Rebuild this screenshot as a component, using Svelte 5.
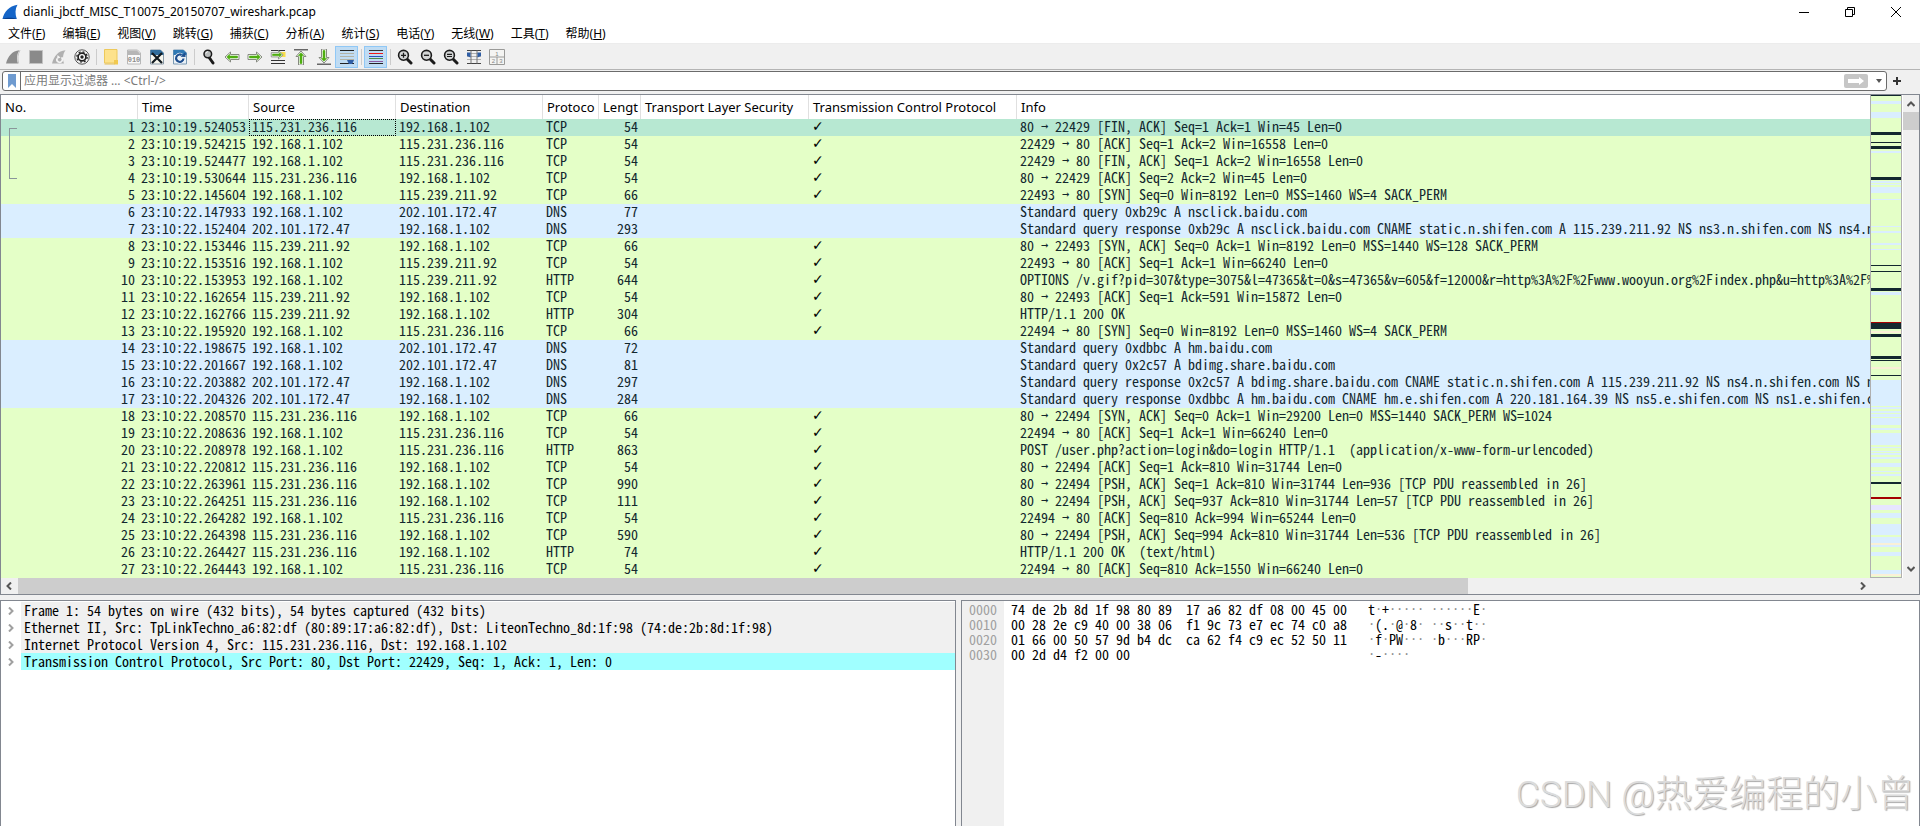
<script lang="ts">
  type Packet = {
    time: string
    src: string
    dst: string
    proto: string
    len: number
    info: string
  }

  const A = '115.231.236.116';
  const B = '115.239.211.92';
  const ME = '192.168.1.102';
  const NS = '202.101.172.47';

  function p(time: string, src: string, dst: string, proto: string, len: number, info: string): Packet {
    return { time, src, dst, proto, len, info };
  }

  const packets: Packet[] = [
    p('23:10:19.524053', A, ME, 'TCP', 54, '80 → 22429 [FIN, ACK] Seq=1 Ack=1 Win=45 Len=0'),
    p('23:10:19.524215', ME, A, 'TCP', 54, '22429 → 80 [ACK] Seq=1 Ack=2 Win=16558 Len=0'),
    p('23:10:19.524477', ME, A, 'TCP', 54, '22429 → 80 [FIN, ACK] Seq=1 Ack=2 Win=16558 Len=0'),
    p('23:10:19.530644', A, ME, 'TCP', 54, '80 → 22429 [ACK] Seq=2 Ack=2 Win=45 Len=0'),
    p('23:10:22.145604', ME, B, 'TCP', 66, '22493 → 80 [SYN] Seq=0 Win=8192 Len=0 MSS=1460 WS=4 SACK_PERM'),
    p('23:10:22.147933', ME, NS, 'DNS', 77, 'Standard query 0xb29c A nsclick.baidu.com'),
    p('23:10:22.152404', NS, ME, 'DNS', 293, 'Standard query response 0xb29c A nsclick.baidu.com CNAME static.n.shifen.com A 115.239.211.92 NS ns3.n.shifen.com NS ns4.n.shifen.com'),
    p('23:10:22.153446', B, ME, 'TCP', 66, '80 → 22493 [SYN, ACK] Seq=0 Ack=1 Win=8192 Len=0 MSS=1440 WS=128 SACK_PERM'),
    p('23:10:22.153516', ME, B, 'TCP', 54, '22493 → 80 [ACK] Seq=1 Ack=1 Win=66240 Len=0'),
    p('23:10:22.153953', ME, B, 'HTTP', 644, 'OPTIONS /v.gif?pid=307&type=3075&l=47365&t=0&s=47365&v=605&f=12000&r=http%3A%2F%2Fwww.wooyun.org%2Findex.php&u=http%3A%2F%2F'),
    p('23:10:22.162654', B, ME, 'TCP', 54, '80 → 22493 [ACK] Seq=1 Ack=591 Win=15872 Len=0'),
    p('23:10:22.162766', B, ME, 'HTTP', 304, 'HTTP/1.1 200 OK'),
    p('23:10:22.195920', ME, A, 'TCP', 66, '22494 → 80 [SYN] Seq=0 Win=8192 Len=0 MSS=1460 WS=4 SACK_PERM'),
    p('23:10:22.198675', ME, NS, 'DNS', 72, 'Standard query 0xdbbc A hm.baidu.com'),
    p('23:10:22.201667', ME, NS, 'DNS', 81, 'Standard query 0x2c57 A bdimg.share.baidu.com'),
    p('23:10:22.203882', NS, ME, 'DNS', 297, 'Standard query response 0x2c57 A bdimg.share.baidu.com CNAME static.n.shifen.com A 115.239.211.92 NS ns4.n.shifen.com NS ns3.n.shifen.com'),
    p('23:10:22.204326', NS, ME, 'DNS', 284, 'Standard query response 0xdbbc A hm.baidu.com CNAME hm.e.shifen.com A 220.181.164.39 NS ns5.e.shifen.com NS ns1.e.shifen.com'),
    p('23:10:22.208570', A, ME, 'TCP', 66, '80 → 22494 [SYN, ACK] Seq=0 Ack=1 Win=29200 Len=0 MSS=1440 SACK_PERM WS=1024'),
    p('23:10:22.208636', ME, A, 'TCP', 54, '22494 → 80 [ACK] Seq=1 Ack=1 Win=66240 Len=0'),
    p('23:10:22.208978', ME, A, 'HTTP', 863, 'POST /user.php?action=login&do=login HTTP/1.1  (application/x-www-form-urlencoded)'),
    p('23:10:22.220812', A, ME, 'TCP', 54, '80 → 22494 [ACK] Seq=1 Ack=810 Win=31744 Len=0'),
    p('23:10:22.263961', A, ME, 'TCP', 990, '80 → 22494 [PSH, ACK] Seq=1 Ack=810 Win=31744 Len=936 [TCP PDU reassembled in 26]'),
    p('23:10:22.264251', A, ME, 'TCP', 111, '80 → 22494 [PSH, ACK] Seq=937 Ack=810 Win=31744 Len=57 [TCP PDU reassembled in 26]'),
    p('23:10:22.264282', ME, A, 'TCP', 54, '22494 → 80 [ACK] Seq=810 Ack=994 Win=65244 Len=0'),
    p('23:10:22.264398', A, ME, 'TCP', 590, '80 → 22494 [PSH, ACK] Seq=994 Ack=810 Win=31744 Len=536 [TCP PDU reassembled in 26]'),
    p('23:10:22.264427', A, ME, 'HTTP', 74, 'HTTP/1.1 200 OK  (text/html)'),
    p('23:10:22.264443', ME, A, 'TCP', 54, '22494 → 80 [ACK] Seq=810 Ack=1550 Win=66240 Len=0')
  ];

  let selected = $state(0);
  let filter = $state('');

  const menus = [
    ['文件', 'F'], ['编辑', 'E'], ['视图', 'V'], ['跳转', 'G'], ['捕获', 'C'], ['分析', 'A'],
    ['统计', 'S'], ['电话', 'Y'], ['无线', 'W'], ['工具', 'T'], ['帮助', 'H']
  ];

  const columns = [
    { title: 'No.', cls: 'no' },
    { title: 'Time', cls: 'time' },
    { title: 'Source', cls: 'addr' },
    { title: 'Destination', cls: 'addr' },
    { title: 'Protoco', cls: 'proto' },
    { title: 'Lengt', cls: 'len' },
    { title: 'Transport Layer Security', cls: 'tls' },
    { title: 'Transmission Control Protocol', cls: 'tcp' },
    { title: 'Info', cls: 'info' }
  ];

  const arrow = '<path d="M1 8 6.500 3V5.500h8.500v5H6.500V13z" fill="#fff" stroke="#85897f"/><path d="M2.800 8 5.500 5.300V7h8v2h-8v1.700z" fill="#4fae10" stroke="#4fae10" stroke-width=".6"/>';
  const lens = '<path d="M9.800 9.800 14 14" stroke="#1b1b1b" stroke-width="3" stroke-linecap="round"/><circle cx="6.500" cy="6.300" r="4.900" fill="#d4d6d6" stroke="#1b1b1b" stroke-width="1.600"/>';
  const page = '<path d="M1.500 1h10l3 3v11h-13z"';

  const icons: Record<string, string> = {
    start: '<path d="M1 14.500C3 7 7 2 14.500 1.200 11.600 5 11.500 10 13 14.500z" fill="#8d8d8d"/><path d="M13.600 14.500C12.400 10 12.600 5 15 1.300" fill="none" stroke="#c4c4c4"/>',
    stop: '<path d="M1.500 1.500h13v13h-13z" fill="#8a8a8a" stroke="#c2c2c2"/>',
    restart: '<path d="M1 14.500C3 7 7 2 14.500 1.200 11.600 5 11.500 10 13 14.500z" fill="#b0b0b0"/><path d="M6 9.500a2.800 2.800 0 1 0 4.500-1.200" fill="none" stroke="#f4f4f4" stroke-width="1.700"/><path d="M6.500 6 9.500 8.500 6 10z" fill="#f4f4f4"/>',
    options: '<circle cx="8" cy="8" r="7.200" fill="#f6f6f6" stroke="#555"/><circle cx="8" cy="8" r="3.900" fill="#fff" stroke="#222" stroke-width="1.700"/><circle cx="8" cy="8" r="5.200" fill="none" stroke="#222" stroke-width="1.300" stroke-dasharray="2 2.080"/><circle cx="8" cy="8" r="1.700" fill="#222"/>',
    open: '<path d="M1.500.5h12.500v13.500h-12.500z" fill="#fde28c" stroke="#edc95b"/><path d="M11 11h4v4.500h-4z" fill="#f1c94f"/><path d="M1.500 15h10" stroke="#e3bd55"/>',
    save: page + ' fill="#fafafa" stroke="#b8b8b8"/><path d="M2 1.500h9l3 3v1.500H2z" fill="#b6b6b6"/><text x="8" y="13" text-anchor="middle" font-family="Liberation Mono" font-size="7" font-weight="700" fill="#8e8e8e">010</text>',
    close: page + ' fill="#f6f6ee" stroke="#8a9aa8"/><path d="M1.500 1h10l3 3v2h-13z" fill="#2f6c9c"/><path d="M3 4 13 14M13 4 3 14" stroke="#111a20" stroke-width="2.200"/>',
    reload: page + ' fill="#e9f0f5" stroke="#7a9ab4"/><path d="M1.500 1h10l3 3v2h-13z" fill="#2f79b4"/><path d="M11.500 9.500a3.700 3.700 0 1 1-1.800-3.500" fill="none" stroke="#fff" stroke-width="3.400"/><path d="M11.500 9.500a3.700 3.700 0 1 1-1.800-3.500" fill="none" stroke="#1e4f8f" stroke-width="2.200"/><path d="M8.500 7.800 13.500 8V3z" fill="#1e4f8f"/>',
    find: '<path d="M8.500 9 12 14" stroke="#1b1b1b" stroke-width="3" stroke-linecap="round"/><circle cx="6.800" cy="5" r="3.800" fill="#b9bcbc" stroke="#1b1b1b" stroke-width="1.500"/><path d="M4.800 4.500a2.300 2.300 0 0 1 2-1.800" stroke="#fff" fill="none"/>',
    back: arrow,
    forward: '<g transform="matrix(-1 0 0 1 16 0)">' + arrow + '</g>',
    goto: '<path d="M1 1.500h14M1 11.500h14M1 14.500h14" stroke="#333" stroke-width="1.200"/><path d="M10 3h5.500v5H10z" fill="#f9df4a"/><g transform="matrix(-.85 0 0 .85 14 -1)">' + arrow + '</g>',
    first: '<path d="M1 .8h14" stroke="#444" stroke-width="1.200"/><g transform="rotate(90 8 8) translate(1 0)">' + arrow + '</g>',
    last: '<path d="M1 15.200h14" stroke="#444" stroke-width="1.200"/><g transform="rotate(-90 8 8) translate(1 0)">' + arrow + '</g>',
    autoscroll: '<path d="M1 1.500h14M1 14.500h14" stroke="#222" stroke-width="1.200"/><path d="M1 4.500h14M1 7.500h14M1 10.500h14" stroke="#b3b3a6"/><path d="M8 11h7l-1.800 4h-3.400z" fill="#2f5ea5"/>',
    colorize: '<path d="M1 1.500h14" stroke="#333"/><path d="M1 4.500h14" stroke="#f01818"/><path d="M1 7.500h14" stroke="#2d4fba"/><path d="M1 9.500h14" stroke="#4c8a4c"/><path d="M1 12.500h14" stroke="#8a5aa0"/><path d="M1 14.500h14" stroke="#222"/>',
    zoomin: lens + '<path d="M4 6.300h5M6.500 3.800v5" stroke="#1b1b1b" stroke-width="1.300"/>',
    zoomout: lens + '<path d="M4 6.300h5" stroke="#1b1b1b" stroke-width="1.300"/>',
    zoomreset: lens + '<path d="M4 5.300h5M4 7.500h5" stroke="#1b1b1b" stroke-width="1.200"/>',
    resize: '<path d="M1 1.500h14M1 14.500h14" stroke="#444"/><path d="M1 4.500h14M1 7.500h14M1 10.500h14" stroke="#b0b0b0"/><path d="M5 1.500v13M11 1.500v13" stroke="#777"/><path d="M1 3.500h3.500v5L1 7zM15 3.500h-3.500v5L15 7z" fill="#2f5ea5"/>',
    layout: '<path d="M.5.5h15v15H.5zM.5 8h15M8 8v7.500" fill="#f4f4f2" stroke="#9a9a98"/><g font-family="Liberation Sans" font-size="6" fill="#888" text-anchor="middle"><text x="8" y="6.500">1</text><text x="4.300" y="14">2</text><text x="11.800" y="14">3</text></g>'
  };

  const tools = [
    'start', 'stop', 'restart', 'options', '|', 'open', 'save', 'close', 'reload', '|',
    'find', 'back', 'forward', 'goto', 'first', 'last', 'autoscroll', '|',
    'colorize', '|', 'zoomin', 'zoomout', 'zoomreset', 'resize', 'layout'
  ];
  const checked = ['autoscroll', 'colorize'];

  // minimap stripes: top, height, kind (b = dns, k = bad tcp, r = rst, c = arp, v = smb)
  const stripes: [number, number, string][] = [
    [0, 1, 'k'], [6, 3, 'b'], [17, 6, 'b'], [37, 3, 'k'], [47, 1, 'k'], [51, 3, 'k'], [56, 2, 'b'],
    [82, 3, 'k'], [86, 2, 'b'], [89, 1, 'b'], [92, 6, 'b'], [104, 1, 'b'], [131, 1, 'b'], [136, 2, 'b'],
    [148, 2, 'b'], [154, 1, 'b'], [170, 1, 'k'], [176, 1, 'k'], [193, 3, 'k'], [197, 3, 'b'], [227, 1, 'r'],
    [228, 6, 'k'], [236, 2, 'c'], [239, 3, 'k'], [261, 3, 'k'], [265, 1, 'k'], [272, 2, 'c'], [280, 1, 'k'],
    [285, 26, 'b'], [312, 2, 'b'], [316, 2, 'b'], [319, 3, 'b'], [323, 7, 'b'], [333, 2, 'b'], [338, 12, 'b'],
    [352, 1, 'b'], [356, 1, 'b'], [358, 2, 'b'], [362, 2, 'b'], [368, 4, 'b'], [376, 1, 'b'], [379, 2, 'b'],
    [387, 2, 'k'], [402, 2, 'r'], [410, 5, 'v'], [418, 5, 'b'], [429, 11, 'b'], [442, 6, 'b'], [448, 2, 'c'],
    [450, 2, 'b'], [457, 4, 'b'], [475, 4, 'b'], [479, 2, 'c']
  ];
  const fills: Record<string, string> = { b: '#daeeff', k: '#12272e', r: '#a40000', c: '#faf0d7', v: '#e7e6ff' };

  const details = [
    'Frame 1: 54 bytes on wire (432 bits), 54 bytes captured (432 bits)',
    'Ethernet II, Src: TpLinkTechno_a6:82:df (80:89:17:a6:82:df), Dst: LiteonTechno_8d:1f:98 (74:de:2b:8d:1f:98)',
    'Internet Protocol Version 4, Src: 115.231.236.116, Dst: 192.168.1.102',
    'Transmission Control Protocol, Src Port: 80, Dst Port: 22429, Seq: 1, Ack: 1, Len: 0'
  ];

  const dump = [
    { off: '0000', hex: '74 de 2b 8d 1f 98 80 89  17 a6 82 df 08 00 45 00', ascii: 't·+····· ······E·' },
    { off: '0010', hex: '00 28 2e c9 40 00 38 06  f1 9c 73 e7 ec 74 c0 a8', ascii: '·(.·@·8· ··s··t··' },
    { off: '0020', hex: '01 66 00 50 57 9d b4 dc  ca 62 f4 c9 ec 52 50 11', ascii: '·f·PW··· ·b···RP·' },
    { off: '0030', hex: '00 2d d4 f2 00 00', ascii: '·-····' }
  ];
</script>

<div class="window">
  <header class="titlebar">
    <svg class="logo" viewBox="0 0 16 16"><path d="M.5 15C2 8 7 2 15.500.8 13 5 13 10 14.800 15z" fill="#1565c8" /><path d="M.5 15c4-1.800 10-1.800 14.300 0z" fill="#0b3f8c" /></svg>
    <h1>dianli_jbctf_MISC_T10075_20150707_wireshark.pcap</h1>
    <div class="winbtns">
      <button aria-label="Minimize"><svg viewBox="0 0 10 10"><path d="M0 5.500h10" /></svg></button>
      <button aria-label="Restore"><svg viewBox="0 0 10 10"><path d="M.5 2.500h7v7h-7zM2.500 2.500v-2h7v7h-2" /></svg></button>
      <button aria-label="Close"><svg viewBox="0 0 10 10"><path d="M0 0 10 10M10 0 0 10" /></svg></button>
    </div>
  </header>

  <nav class="menubar">
    {#each menus as [name, key]}
      <button>{name}(<u>{key}</u>)</button>
    {/each}
  </nav>

  <div class="toolbar">
    {#each tools as t}
      {#if t == '|'}
        <span class="sep"></span>
      {:else}
        <button class:checked={checked.includes(t)} aria-label={t}>
          <svg viewBox="0 0 16 16" fill="none">{@html icons[t]}</svg>
        </button>
      {/if}
    {/each}
  </div>

  <div class="filterbar">
    <div class="filterbox">
      <button class="bookmark" aria-label="Bookmarks"><svg viewBox="0 0 8 14"><path d="M0 0h8v14L4 10 0 14z" fill="#6f9bd0" /></svg></button>
      <input type="text" bind:value={filter} placeholder="应用显示过滤器 … <Ctrl-/>" aria-label="Display filter" />
      <button class="apply" aria-label="Apply"><svg viewBox="0 0 16 8"><path d="M0 2h11V0l5 4-5 4V6H0z" fill="#fff" /></svg></button>
      <button class="drop" aria-label="History"><svg viewBox="0 0 6 4"><path d="M0 0h6L3 4z" fill="#555" /></svg></button>
    </div>
    <button class="plus" aria-label="Add filter button"><svg viewBox="0 0 8 8"><path d="M4 0v8M0 4h8" stroke="#333" stroke-width="2" /></svg></button>
  </div>

  <section class="packets">
    <div class="listrow">
      <div class="listwrap">
        <table>
          <colgroup>
            {#each columns as c}
              <col class={c.cls} />
            {/each}
          </colgroup>
          <thead>
            <tr>
              {#each columns as c}
                <th>{c.title}</th>
              {/each}
            </tr>
          </thead>
          <tbody>
            {#each packets as k, i}
              <tr class={k.proto == 'DNS' ? 'udp' : 'tcp'} class:selected={i == selected} onclick={() => (selected = i)}>
                <td class="num">
                  {#if i < 4}
                    <i class="rel" class:top={i == 0} class:bottom={i == 3}></i>
                  {/if}
                  {i + 1}
                </td>
                <td>{k.time}</td>
                <td class:focus={i == selected}>{k.src}</td>
                <td>{k.dst}</td>
                <td>{k.proto}</td>
                <td class="num">{k.len}</td>
                <td></td>
                <td class="tick">{k.proto == 'DNS' ? '' : '✓'}</td>
                <td>{#each k.info.split('→') as part, n}{#if n > 0}<span class="arr">→</span>{/if}{part}{/each}</td>
              </tr>
            {/each}
          </tbody>
        </table>
      </div>
      <svg class="minimap" viewBox="0 0 30 482" preserveAspectRatio="none" shape-rendering="crispEdges">
        {#each stripes as [y, h, kind]}
          <rect x="0" {y} width="30" height={h} fill={fills[kind]} />
        {/each}
      </svg>
      <div class="vscroll">
        <svg viewBox="0 0 8 6"><path d="M.5 5 4 1.500 7.500 5" /></svg>
        <div class="vtrack"><div class="vthumb"></div></div>
        <svg viewBox="0 0 8 6"><path d="M.5 1 4 4.500 7.500 1" /></svg>
      </div>
    </div>
    <div class="hscroll">
      <svg viewBox="0 0 6 8"><path d="M5 .5 1.500 4 5 7.500" /></svg>
      <div class="htrack"><div class="hthumb"></div></div>
      <svg viewBox="0 0 6 8"><path d="M1 .5 4.500 4 1 7.500" /></svg>
    </div>
  </section>

  <section class="panes">
    <ul class="details">
      {#each details as d, i}
        <li>
          <svg viewBox="0 0 6 8"><path d="M1 .5 4.500 4 1 7.500" /></svg>
          <span class:active={i == 3}>{d}</span>
        </li>
      {/each}
    </ul>
    <div class="bytes">
      {#each dump as l}
        <div class="line">
          <span class="off">{l.off}</span>
          <span class="hex">{l.hex}</span>
          <span class="ascii">{#each l.ascii as ch}<span class:dot={ch == '·'}>{ch}</span>{/each}</span>
        </div>
      {/each}
    </div>
  </section>

  <div class="watermark">CSDN @热爱编程的小曾</div>
</div>

<style>
  :global(body) {
    overflow: hidden;
  }

  .window {
    --ui: "Noto Sans", "Noto Sans CJK SC", sans-serif;
    --mono: "Noto Sans Mono CJK SC", "Liberation Mono", monospace;
    display: flex;
    flex-direction: column;
    height: 100vh;
    background: #f0f0f0;
    color: #000;
    font-family: var(--ui);
    font-size: 12px;
  }

  .window * {
    box-sizing: border-box;
  }

  button {
    display: flex;
    align-items: center;
    justify-content: center;
    padding: 0;
    border: 0;
    background: none;
    color: inherit;
    font: inherit;
  }

  .titlebar {
    display: flex;
    align-items: center;
    height: 23px;
    padding: 0 1px 0 2px;
    background: #fff;
  }

  .logo {
    width: 16px;
    height: 16px;
  }

  h1 {
    flex: 1;
    margin: 0;
    padding-left: 5px;
    font-size: 12px;
    font-weight: 400;
  }

  .winbtns {
    display: flex;
  }

  .winbtns button {
    width: 46px;
    height: 20px;
  }

  .winbtns svg {
    width: 10px;
    height: 10px;
    fill: none;
    stroke: #000;
  }

  .menubar {
    display: flex;
    height: 21px;
    padding-left: 8px;
    gap: 17px;
    background: #fff;
    border-bottom: 1px solid #ececec;
  }

  .menubar button {
    white-space: nowrap;
  }

  .toolbar {
    display: flex;
    align-items: center;
    height: 26px;
    padding-left: 1px;
    border-bottom: 1px solid #b4b4b4;
  }

  .toolbar button {
    width: 23px;
    height: 22px;
  }

  .toolbar button.checked {
    background: #c0dcf3;
    border: 1px solid #90c8f6;
  }

  .toolbar svg {
    flex: none;
    width: 16px;
    height: 16px;
  }

  .sep {
    width: 6px;
    height: 16px;
    background: linear-gradient(#ccc, #ccc) 3px 0 / 1px 100% no-repeat;
  }

  .filterbar {
    display: flex;
    align-items: center;
    height: 24px;
    padding: 0 19px 2px 2px;
    gap: 6px;
  }

  .filterbox {
    flex: 1;
    display: flex;
    align-items: center;
    height: 20px;
    background: #fff;
    border: 1px solid #6b6b6b;
    border-radius: 3px;
  }

  .bookmark {
    width: 18px;
    height: 18px;
    border-right: 1px solid #6b6b6b;
  }

  .bookmark svg {
    width: 8px;
    height: 14px;
  }

  input {
    flex: 1;
    padding: 0 3px;
    border: 0;
    outline: none;
    background: none;
    font: inherit;
    line-height: 18px;
  }

  input::placeholder {
    color: #7b7b7b;
  }

  .apply {
    width: 24px;
    height: 14px;
    background: #c6c6c6;
    border-radius: 2px;
  }

  .apply svg {
    width: 16px;
    height: 8px;
  }

  .drop {
    width: 18px;
    height: 18px;
    padding-left: 4px;
  }

  .drop svg {
    width: 6px;
    height: 4px;
  }

  .plus svg {
    width: 8px;
    height: 8px;
  }

  .packets {
    display: flex;
    flex-direction: column;
    background: #fff;
    border: 1px solid #828790;
  }

  .listrow {
    display: flex;
  }

  .listwrap {
    flex: 1;
    min-width: 0;
    overflow: hidden;
  }

  table {
    width: 100%;
    table-layout: fixed;
    border-collapse: collapse;
  }

  col.no { width: 137px; }
  col.time { width: 111px; }
  col.addr { width: 147px; }
  col.proto { width: 56px; }
  col.len { width: 42px; }
  col.tls { width: 168px; }
  col.tcp { width: 208px; }

  th {
    height: 24px;
    padding: 0 0 0 4px;
    font-size: 13px;
    font-weight: 400;
    line-height: 18px;
    text-align: left;
    white-space: nowrap;
    background: linear-gradient(#e0e0e0, #e0e0e0) right / 1px 100% no-repeat;
  }

  th:last-child {
    background: none;
  }

  td {
    height: 17px;
    padding: 0 3px;
    font-family: var(--mono);
    font-size: 14px;
    line-height: 15px;
    vertical-align: top;
    white-space: pre;
    color: #12272e;
  }

  .num {
    position: relative;
    text-align: right;
    white-space: normal;
  }

  .tcp td { background: #e4ffc7; }
  .udp td { background: #daeeff; }
  .selected td { background: #b7e8d2; }

  td.focus {
    outline: 1px dotted #000;
    outline-offset: -1px;
  }

  td.tick {
    font-family: "DejaVu Sans", sans-serif;
    font-weight: 700;
    color: #000;
  }

  .rel {
    position: absolute;
    top: 0;
    bottom: 0;
    left: 8px;
    width: 8px;
    border-left: 1px solid #8a969a;
  }

  .rel.top {
    top: 50%;
    border-top: 1px solid #8a969a;
  }

  .rel.bottom {
    bottom: 50%;
    border-bottom: 1px solid #8a969a;
  }

  .arr {
    display: inline-block;
    width: 7px;
    height: 15px;
    vertical-align: top;
    font-family: "DejaVu Sans Mono", monospace;
    font-size: 12px;
  }

  .minimap {
    flex: none;
    align-self: flex-start;
    width: 32px;
    height: 483px;
    background: #e4ffc7;
    border: 1px solid #b0b0b0;
    border-top: 0;
  }

  .vscroll {
    display: flex;
    flex-direction: column;
    align-items: center;
    justify-content: space-between;
    width: 16px;
    margin-left: 1px;
    padding: 6px 0;
    background: #f0f0f0;
  }

  .vscroll svg,
  .hscroll svg {
    flex: none;
    fill: none;
    stroke: #555;
    stroke-width: 2;
  }

  .vscroll svg {
    width: 8px;
    height: 6px;
  }

  .vtrack {
    flex: 1;
    width: 100%;
    padding-top: 5px;
  }

  .vthumb {
    height: 18px;
    background: #cdcdcd;
  }

  .hscroll {
    display: flex;
    align-items: center;
    height: 16px;
    padding: 0 53px 0 5px;
    gap: 6px;
    background: #f0f0f0;
  }

  .hscroll svg {
    width: 6px;
    height: 8px;
  }

  .htrack {
    flex: 1;
    height: 100%;
  }

  .hthumb {
    width: 79%;
    height: 100%;
    background: #cdcdcd;
  }

  .panes {
    flex: 1;
    display: grid;
    grid-template-columns: 956fr 959fr;
    gap: 5px;
    min-height: 0;
    margin-top: 5px;
  }

  .details,
  .bytes {
    margin: 0;
    padding: 1px 0 0;
    background: #fff;
    border: 1px solid #828790;
    border-bottom: 0;
    font-family: var(--mono);
    font-size: 14px;
    white-space: pre;
    overflow: hidden;
  }

  .details {
    list-style: none;
  }

  .details li {
    display: flex;
    align-items: center;
    line-height: 17px;
    padding-left: 7px;
    gap: 7px;
  }

  .details svg {
    width: 6px;
    height: 8px;
    fill: none;
    stroke: #a0a0a0;
    stroke-width: 2;
  }

  .details span {
    flex: 1;
    height: 17px;
    padding-left: 3px;
    background: #f0f0f0;
  }

  .details span.active {
    background: #a0ffff;
  }

  .bytes {
    display: flex;
    flex-direction: column;
    background: linear-gradient(#f0f0f0, #f0f0f0) 0 0 / 42px 100% no-repeat #fff;
  }

  .line {
    display: grid;
    grid-template-columns: 42px 357px auto;
    padding-left: 7px;
    line-height: 15px;
  }

  .off {
    color: #a0a0a0;
  }

  .ascii span {
    display: inline-block;
    width: 7px;
    height: 15px;
    vertical-align: top;
  }

  .ascii .dot {
    color: #909090;
    font-family: "DejaVu Sans Mono", monospace;
    font-size: 12px;
  }

  .watermark {
    position: absolute;
    right: 6px;
    bottom: 8px;
    color: #dcdcdc;
    font-family: Roboto, "Noto Sans CJK SC", sans-serif;
    font-size: 37px;
    font-weight: 300;
    line-height: 46px;
    text-shadow: 1px 1px 1px #a8a8a8;
  }
</style>
